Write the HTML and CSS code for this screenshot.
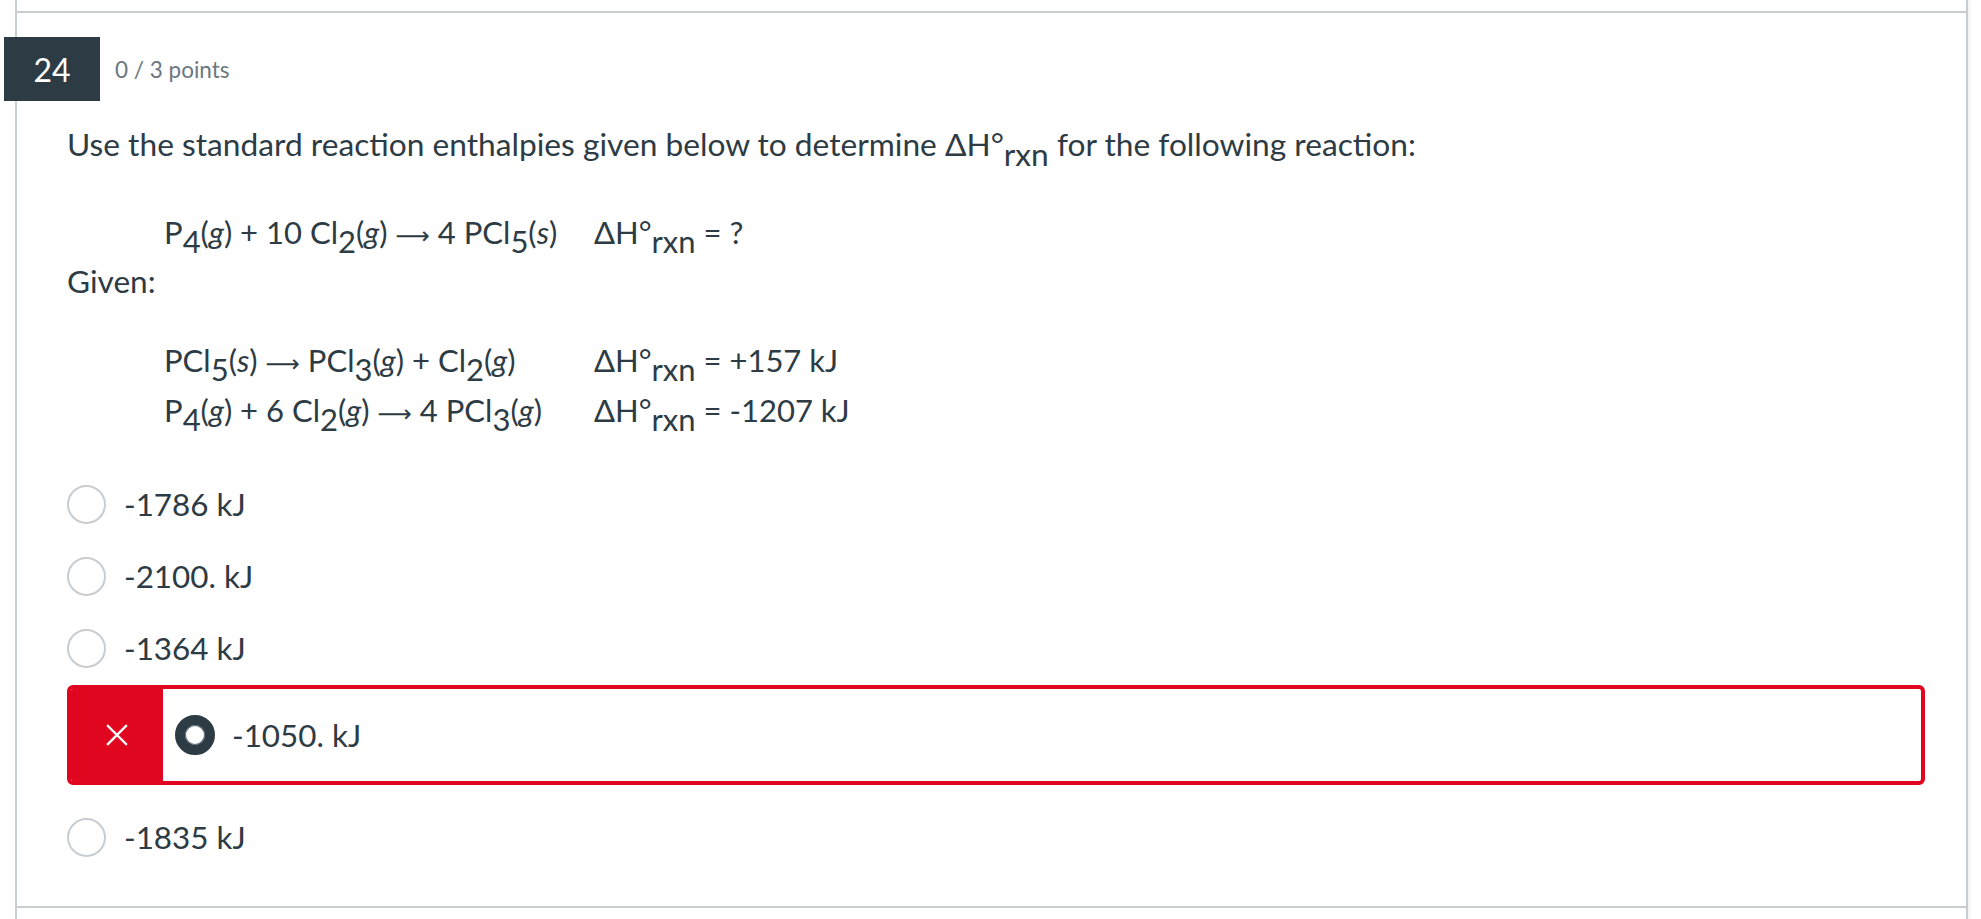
FILE: index.html
```html
<!DOCTYPE html>
<html lang="en">
<head>
<meta charset="utf-8">
<title>Question 24</title>
<link rel="stylesheet" href="styles.css">
</head>
<body>
<div class="page">
  <div class="prev"></div>
  <section class="question">
    <header class="qhead">
      <div class="qnum">24</div>
      <div class="points">0 / 3 points</div>
    </header>
    <div class="qbody">
      <p class="intro">Use the standard reaction enthalpies given below to determine ΔH°<sub class="sub">rxn</sub> for the following reaction:</p>
      <div class="eqtable target">
        <div class="eq">P<sub class="sub">4</sub>(<i>g</i>) + 10 Cl<sub class="sub">2</sub>(<i>g</i>) <span class="arrow">⟶</span> 4 PCl<sub class="sub">5</sub>(<i>s</i>)</div>
        <div class="dh">ΔH°<sub class="sub">rxn</sub> <span class="val">= ?</span></div>
      </div>
      <p class="given">Given:</p>
      <div class="eqtable givens">
        <div class="eq">PCl<sub class="sub">5</sub>(<i>s</i>) <span class="arrow">⟶</span> PCl<sub class="sub">3</sub>(<i>g</i>) + Cl<sub class="sub">2</sub>(<i>g</i>)</div>
        <div class="dh">ΔH°<sub class="sub">rxn</sub> <span class="val">= +157 kJ</span></div>
        <div class="eq">P<sub class="sub">4</sub>(<i>g</i>) + 6 Cl<sub class="sub">2</sub>(<i>g</i>) <span class="arrow">⟶</span> 4 PCl<sub class="sub">3</sub>(<i>g</i>)</div>
        <div class="dh">ΔH°<sub class="sub">rxn</sub> <span class="val">= -1207 kJ</span></div>
      </div>
      <ul class="answers">
        <li class="answer"><span class="radio"></span><span class="atext">-1786 kJ</span></li>
        <li class="answer"><span class="radio"></span><span class="atext">-2100. kJ</span></li>
        <li class="answer"><span class="radio"></span><span class="atext">-1364 kJ</span></li>
        <li class="answer wrong">
          <span class="flag"><svg width="22" height="22" viewBox="0 0 22 22"><path d="M2 2 L20 20 M20 2 L2 20" stroke="#fff" stroke-width="2.4" fill="none" stroke-linecap="square"/></svg></span>
          <span class="radio checked"></span><span class="atext">-1050. kJ</span>
        </li>
        <li class="answer"><span class="radio"></span><span class="atext">-1835 kJ</span></li>
      </ul>
    </div>
  </section>
</div>
</body>
</html>
```
FILE: styles.css
```css
html, body {
  margin: 0;
  padding: 0;
  background: #ffffff;
}
body {
  font-family: Lato, "Open Sans", "DejaVu Sans", sans-serif;
  color: #2d3b45;
  height: 919px;
  overflow: hidden;
}
.page {
  margin: 0 13px 0 15px;
  height: 919px;
  border-left: 2px solid #c7cdd1;
  border-right: 2px solid #c7cdd1;
  box-shadow: 2px 0 3px rgba(0, 0, 0, 0.06);
}
.prev {
  height: 11px;
}
.question {
  border-top: 2px solid #c7cdd1;
  border-bottom: 2px solid #c7cdd1;
  height: 893px;
  box-sizing: content-box;
}
.qhead {
  display: flex;
  align-items: center;
  padding-top: 24px;
}
.qnum {
  margin-left: -13px;
  width: 96px;
  height: 64px;
  background: #2d3b45;
  color: #ffffff;
  font-size: 32px;
  display: flex;
  align-items: center;
  justify-content: center;
}
.points {
  margin-left: 15px;
  font-size: 22.5px;
  color: #6b7780;
}
.qbody {
  padding: 0 41px 0 50px;
}
.intro {
  margin: 22px 0 0;
  font-size: 31.7px;
  line-height: 42px;
}
.sub {
  font-size: 1em;
  vertical-align: -0.3em;
  line-height: 0;
}
.eqtable {
  display: grid;
  grid-template-columns: 430px auto;
  margin-left: 97px;
  font-size: 31px;
}
.target {
  margin-top: 46px;
  line-height: 42px;
}
.givens {
  margin-top: 33px;
  line-height: 50px;
}
.eq i {
  font-style: italic;
}
.arrow {
  font-family: "DejaVu Sans", sans-serif;
  font-size: 24px;
  line-height: 0;
}
.given {
  margin: 7px 0 0;
  font-size: 31.6px;
  line-height: 42px;
}
.answers {
  list-style: none;
  margin: 33px 0 0;
  padding: 0;
}
.answer {
  display: flex;
  align-items: center;
  height: 72px;
  font-size: 31.4px;
}
.radio {
  width: 39px;
  height: 39px;
  box-sizing: border-box;
  border: 2px solid #c7cdd1;
  border-radius: 50%;
  flex: none;
}
.atext {
  margin-left: 18px;
}
.answer.wrong {
  height: 100px;
  box-sizing: border-box;
  border: 4px solid #e0061f;
  border-radius: 6px;
  margin: 1px 0 16px;
  overflow: hidden;
}
.flag {
  align-self: stretch;
  width: 92px;
  background: #e0061f;
  display: flex;
  align-items: center;
  justify-content: center;
  flex: none;
}
.radio.checked {
  width: 40px;
  height: 40px;
  margin-left: 12px;
  border: 10px solid #2d3b45;
  background: #ffffff;
  box-shadow: inset 0 0 0 1px #5a6670;
}
.wrong .atext {
  margin-left: 17px;
}
```
